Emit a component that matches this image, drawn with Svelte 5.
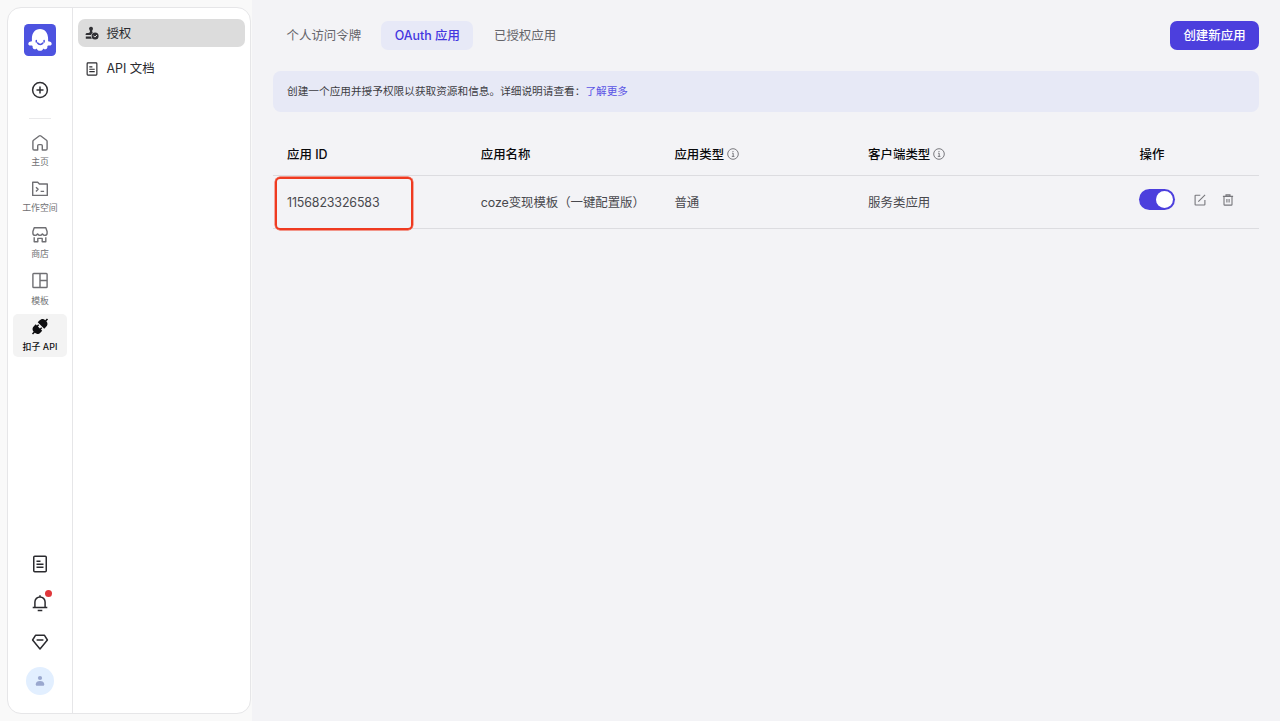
<script>
  const nav = [
    { label: '主页', icon: 'home' },
    { label: '工作空间', icon: 'space' },
    { label: '商店', icon: 'store' },
    { label: '模板', icon: 'template' },
    { label: '扣子 API', icon: 'api', active: true }
  ];
  const tabs = ['个人访问令牌', 'OAuth 应用', '已授权应用'];
  let current = $state(1);
  let enabled = $state(true);
</script>

{#snippet doc(size)}
  <svg width={size} height={size} viewBox="0 0 18 18" fill="none" stroke="currentColor" stroke-width="1.5">
    <rect x="2.75" y="1.2" width="12.5" height="15.6" rx="1" />
    <path d="M5.5 6.3h4M5.5 9.3h7M5.5 12.3h7" />
  </svg>
{/snippet}

{#snippet info()}
  <svg width="12" height="12" viewBox="0 0 12 12" fill="none" stroke="#6b6b70" stroke-width="0.9">
    <circle cx="6" cy="6" r="5.3" />
    <path d="M5.1 5.2h1.1v3.1M4.8 8.4h2.6" />
    <circle cx="6" cy="3.5" r=".6" fill="#6b6b70" stroke="none" />
  </svg>
{/snippet}

<div class="page">
  <div class="side">
    <div class="card">
      <nav class="rail">
        <svg class="logo" width="32" height="32" viewBox="0 0 32 32">
          <rect width="32" height="32" rx="4.5" fill="#4d53e0" />
          <path transform="translate(0 -.8) scale(1 1.12)" fill="#fff" d="M16 5.1c-5.1 0-8.1 3.7-8.1 8.7v2.4c-1.3.2-3.1.6-3.5 1.6-.5 1.3.8 2.3 2.3 2.2.8 0 1.500.1 1.900.3-.1 1.500.2 2.500 1.500 2.900 1 .3 1.900-.1 2.600-.7.5 1.500 1.500 2.100 3.300 2.100s2.800-.6 3.300-2.100c.7.600 1.600 1 2.600.7 1.300-.4 1.600-1.400 1.500-2.900.4-.2 1.100-.3 1.900-.3 1.500.1 2.800-.9 2.300-2.200-.4-1-2.200-1.400-3.500-1.600v-2.400c0-5-3-8.700-8.100-8.700z" />
          <path d="M13.6 19c1.200 1.900 4.100 1.900 5.300 0" fill="none" stroke="#4d53e0" stroke-width="1.500" stroke-linecap="round" />
          <path d="M12.300 16.500v1.400M20.100 16.500v1.400" stroke="#4d53e0" stroke-width="1.500" stroke-linecap="round" />
        </svg>
        <svg class="plus" width="18" height="18" viewBox="0 0 18 18" fill="none" stroke="#303034" stroke-width="1.5">
          <circle cx="9" cy="9" r="7.400" />
          <path d="M9 5.500v7M5.500 9h7" />
        </svg>
        <span class="rule"></span>
        <div class="items">
          {#each nav as item}
            <div class="item" class:active={item.active}>
              <svg width="18" height="18" viewBox="0 0 18 18" fill="none" stroke="currentColor" stroke-width="1.400" stroke-linejoin="round">
                {#if item.icon === 'home'}
                  <path d="M6.700 16H3.200Q1.900 16 1.900 14.700V7.500Q1.900 6.800 2.500 6.300L8.100 2Q9 1.300 9.900 2l5.600 4.300q.6.500.6 1.200v7.200q0 1.300-1.300 1.300h-3.500v-4.200q0-1.200-1.200-1.200H7.900q-1.200 0-1.200 1.200z" />
                {:else if item.icon === 'space'}
                  <path d="M1.700 2.300h5l1.700 1.700h7.900v11.400H1.700z" />
                  <path d="M5 7.200l2.100 2.100L5 11.400M9.600 11.400h3.500" />
                {:else if item.icon === 'store'}
                  <path d="M3.200 1.700h11.600l1.300 3.800v1.900q-.2 2-2.300 2-1.500 0-2.400-1.500Q10.500 9.400 9 9.400T6.600 7.900Q5.700 9.400 4.200 9.400 2.100 9.400 1.900 7.400V5.500z" />
                  <path d="M3.200 11.200v4.500h3.600v-3.300h4.400v3.300h3.600v-4.500" />
                {:else if item.icon === 'template'}
                  <rect x="1.900" y="1.500" width="14.200" height="14" rx=".8" />
                  <path d="M9 1.500v14M9 8.500h7.100" />
                {:else}
                  <g transform="translate(0 -.5) rotate(45 9 9)" fill="currentColor" stroke="none">
                    <path d="M8.200-1.600h1.600v2.400c2.700.2 3.800 1.900 3.800 4.400v2.400H4.400V5.200c0-2.500 1.100-4.200 3.800-4.400z" />
                    <path d="M4.400 10.500h1.700V8.700h1.500v1.800h2.800V8.700h1.500v1.800h1.700v2.300c0 2.500-1.100 4.200-3.800 4.400v2.400H8.200v-2.400c-2.700-.2-3.800-1.900-3.800-4.400z" />
                  </g>
                {/if}
              </svg>
              <span>{item.label}</span>
            </div>
          {/each}
        </div>
        <div class="tools">
          {@render doc(18)}
          <div class="bell">
            <svg width="18" height="18" viewBox="0 0 18 18" fill="none" stroke="currentColor" stroke-width="1.500">
              <path d="M3.900 13.600V8a5.100 5.100 0 0 1 10.200 0v5.600M1.700 13.600h14.600M6.700 16.400h4.600M9 1.200v2" />
            </svg>
            <i></i>
          </div>
          <svg width="18" height="18" viewBox="0 0 18 18" fill="none" stroke="currentColor" stroke-width="1.500" stroke-linejoin="round">
            <path d="M4.500 2.300h9l2.900 4.700L9 15.900 1.600 7zM5.600 7.100h6.800" />
          </svg>
        </div>
        <div class="avatar">
          <svg width="10" height="12" viewBox="0 0 10 12" fill="#9aa8cf">
            <circle cx="5" cy="3" r="2.100" />
            <path d="M.7 9.300C.7 7.200 2.600 6 5 6s4.300 1.200 4.300 3.300c0 1-.5 1.500-1.500 1.500H2.200c-1 0-1.500-.5-1.500-1.500z" />
          </svg>
        </div>
      </nav>
      <div class="menu">
        <div class="entry selected">
          <svg width="14" height="14" viewBox="0 0 14 14">
            <path fill="#303034" d="M4 2.400a2 2 0 1 1 4 .6c-.2.800-.8 1.200-.8 2.200 0 .700.300 1.200.700 1.500-.9.600-1.600 1.300-1.800 2.300H.6V8.300c0-.7.400-1.100 1.200-1.200 1.900-.2 3.200-.6 3.200-1.700 0-1-.9-1.900-1-3zM.8 10.600h5.200c.1.800.4 1.500.9 2.100H.8z" />
            <circle cx="10.100" cy="10" r="3.500" fill="#303034" />
            <path d="M8.400 9.600l1.500 1.500 2.100-2.100" fill="none" stroke="#ddd" stroke-width="1" />
          </svg>
          <span>授权</span>
        </div>
        <div class="entry">
          {@render doc(14)}
          <span>API 文档</span>
        </div>
      </div>
    </div>
  </div>

  <main>
    <header>
      <div class="tabs">
        {#each tabs as tab, i}
          <button class="tab" class:on={current === i} onclick={() => (current = i)}>{tab}</button>
        {/each}
      </div>
      <button class="create">创建新应用</button>
    </header>
    <div class="notice">创建一个应用并授予权限以获取资源和信息。详细说明请查看：<span class="link">了解更多</span></div>
    <div class="table">
      <div class="row head">
        <div>应用 ID</div>
        <div>应用名称</div>
        <div><span>应用类型</span>{@render info()}</div>
        <div><span>客户端类型</span>{@render info()}</div>
        <div>操作</div>
      </div>
      <div class="row body">
        <div class="id">1156823326583<i class="frame"></i></div>
        <div class="name">coze变现模板（一键配置版）</div>
        <div>普通</div>
        <div>服务类应用</div>
        <div class="actions">
          <button class="switch" class:enabled aria-label="启用" onclick={() => (enabled = !enabled)}><i></i></button>
          <svg width="12" height="12" viewBox="0 0 12 12" fill="none" stroke="#77777c" stroke-width="1.100">
            <path d="M6.300 1.200H1.700q-.6 0-.6.600v8.600q0 .6.600.6h8.600q.6 0 .6-.6V6M4.300 7.700l6.800-6.900" />
          </svg>
          <svg width="12" height="12" viewBox="0 0 12 12" fill="none" stroke="#77777c" stroke-width="1.100">
            <path d="M.9 2.400h10.200M4 2.300V.9h4v1.400M2 2.400v8q0 .7.700.7h6.600q.7 0 .7-.7v-8M4.900 5v3.500M7.100 5v3.500" />
          </svg>
        </div>
      </div>
    </div>
  </main>
</div>

<style>
  :global(body) { margin: 0; }
  .page { display: flex; width: 1280px; height: 721px; overflow: hidden; background: #f3f3f6; color: #2b2b2f; font: 12.440px/18px Inter, "Noto Sans CJK SC", sans-serif; }
  .page * { box-sizing: border-box; }
  button { border: 0; margin: 0; font: inherit; }
  svg { flex: none; display: block; }
  .side { width: 252px; padding: 7px 1px 7px 7px; background: #f9f9f9; }
  .card { height: 707px; display: flex; background: #fff; border: 1px solid #e6e6e8; border-radius: 14px; overflow: hidden; }
  .rail { width: 65px; border-right: 1px solid #e6e6e8; display: flex; flex-direction: column; align-items: center; padding: 16px 0 18px; }
  .plus { margin-top: 24.700px; }
  .rule { width: 22px; height: 1px; background: #e9e9eb; margin-top: 19.300px; }
  .items { display: flex; flex-direction: column; gap: 4px; margin-top: 10.700px; }
  .item { width: 54px; height: 42.200px; border-radius: 5px; display: flex; flex-direction: column; align-items: center; padding-top: 4px; color: #6f6f73; font-size: 8.890px; line-height: 12px; }
  .item span { margin-top: 4.300px; white-space: nowrap; }
  .item.active { background: #f3f3f3; color: #0e0e10; font-weight: 500; letter-spacing: .1px; }
  .tools { margin-top: auto; display: flex; flex-direction: column; gap: 21px; }
  .bell { position: relative; }
  .bell i { position: absolute; right: -3px; top: -4px; width: 7px; height: 7px; border-radius: 50%; background: #e0373b; }
  .avatar { width: 28px; height: 28px; border-radius: 50%; background: #e2efff; display: flex; align-items: center; justify-content: center; margin-top: 16px; }
  .menu { flex: 1; padding: 11px 5px; display: flex; flex-direction: column; gap: 7.500px; }
  .entry { height: 28px; border-radius: 7px; padding-left: 7.400px; display: flex; align-items: center; gap: 7px; }
  .entry span { padding-top: 1px; }
  .selected { background: #dcdcdc; }
  main { flex: 1; padding: 21px 21px 0; }
  header { display: flex; justify-content: space-between; height: 28.500px; }
  .tabs { display: flex; gap: 7px; }
  .tab { padding: 2px 13.500px 0; background: none; border-radius: 7px; color: #65656a; white-space: nowrap; }
  .tab:first-child { padding-right: 13px; }
  .tab.on { background: #e7e9f7; color: #4437e0; font-weight: 500; }
  .create { width: 89px; padding: 2px 0 0; border-radius: 7px; background: #4c3fdd; color: #fff; font-weight: 500; }
  .notice { margin-top: 21.500px; height: 41px; border-radius: 8px; background: #e7e9f6; padding-left: 14px; font-size: 10.670px; line-height: 42px; color: #3c3c42; }
  .link { color: #5b55e5; }
  .table { margin-top: 21px; }
  .row { display: grid; grid-template-columns: 193.700px 193.700px 193.700px 271.500px 1fr; align-items: center; border-bottom: 1px solid #dcdce0; }
  .row > div { padding: 2px 0 0 14px; display: flex; align-items: center; gap: 3px; white-space: nowrap; }
  .row.head svg { margin-top: -1.500px; }
  .head { height: 43px; color: #09090b; font-weight: 500; }
  .body { height: 53px; color: #48484d; }
  .id { position: relative; letter-spacing: -.14px; }
  .row .name { letter-spacing: -.07px; }
  .frame { position: absolute; left: 1.500px; top: -15.500px; width: 138px; height: 53px; border: 2.500px solid #ef3a20; border-radius: 5px; box-shadow: 0 0 0 .4px #ef3a20; }
  .row .actions { gap: 0; padding: 0 0 5px 13.600px; }
  .actions svg:nth-of-type(1) { margin-left: 18.800px; }
  .actions svg:nth-of-type(2) { margin-left: 16.500px; }
  .switch { width: 36px; height: 21px; border-radius: 11px; padding: 2px; background: #b5b5bb; display: flex; }
  .switch.enabled { background: #4c3fdd; justify-content: flex-end; }
  .switch i { width: 17px; height: 17px; border-radius: 50%; background: #fff; }
</style>
